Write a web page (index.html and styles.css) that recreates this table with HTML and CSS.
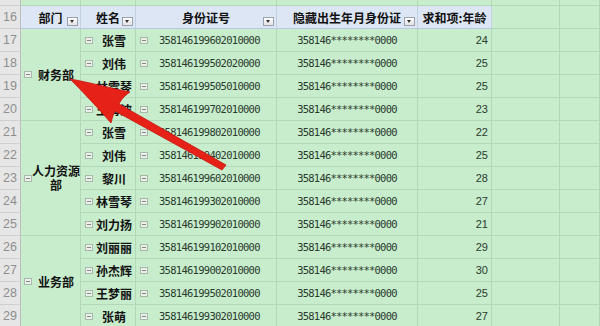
FILE: index.html
```html
<!DOCTYPE html>
<html lang="zh">
<head>
<meta charset="utf-8">
<link rel="stylesheet" href="styles.css">
</head>
<body>
<div class="page">
  <div class="sheet">
    <!-- row 15 (partial) -->
    <div class="rh"></div>
    <div class="c"></div><div class="c"></div><div class="c"></div><div class="c"></div><div class="c"></div><div class="c"></div><div class="c"></div>

    <!-- row 16 header -->
    <div class="rh">16</div>
    <div class="h">部门<span class="dd"></span></div>
    <div class="h">姓名<span class="dd"></span></div>
    <div class="h">身份证号<span class="dd"></span></div>
    <div class="h">隐藏出生年月身份证<span class="dd"></span></div>
    <div class="h">求和项:年龄</div>
    <div class="c"></div><div class="c"></div>

    <!-- 17 -->
    <div class="rh">17</div>
    <div class="dept span4"><span class="tog"></span><span class="dname">财务部</span></div>
    <div class="nm"><span class="tog"></span><span class="nt">张雪</span></div>
    <div class="id"><span class="tog"></span><span class="it">358146199602010000</span></div>
    <div class="mk">358146********0000</div>
    <div class="age">24</div>
    <div class="c"></div><div class="c"></div>

    <!-- 18 -->
    <div class="rh">18</div>
    <div class="nm"><span class="tog"></span><span class="nt">刘伟</span></div>
    <div class="id"><span class="tog"></span><span class="it">358146199502020000</span></div>
    <div class="mk">358146********0000</div>
    <div class="age">25</div>
    <div class="c"></div><div class="c"></div>

    <!-- 19 -->
    <div class="rh">19</div>
    <div class="nm"><span class="tog"></span><span class="nt">林雪琴</span></div>
    <div class="id"><span class="tog"></span><span class="it">358146199505010000</span></div>
    <div class="mk">358146********0000</div>
    <div class="age">25</div>
    <div class="c"></div><div class="c"></div>

    <!-- 20 -->
    <div class="rh">20</div>
    <div class="nm"><span class="tog"></span><span class="nt">王海波</span></div>
    <div class="id"><span class="tog"></span><span class="it">358146199702010000</span></div>
    <div class="mk">358146********0000</div>
    <div class="age">23</div>
    <div class="c"></div><div class="c"></div>

    <!-- 21 -->
    <div class="rh">21</div>
    <div class="dept span5"><span class="tog"></span><span class="dname">人力资源部</span></div>
    <div class="nm"><span class="tog"></span><span class="nt">张雪</span></div>
    <div class="id"><span class="tog"></span><span class="it">358146199802010000</span></div>
    <div class="mk">358146********0000</div>
    <div class="age">22</div>
    <div class="c"></div><div class="c"></div>

    <!-- 22 -->
    <div class="rh">22</div>
    <div class="nm"><span class="tog"></span><span class="nt">刘伟</span></div>
    <div class="id"><span class="tog"></span><span class="it">358146199402010000</span></div>
    <div class="mk">358146********0000</div>
    <div class="age">25</div>
    <div class="c"></div><div class="c"></div>

    <!-- 23 -->
    <div class="rh">23</div>
    <div class="nm"><span class="tog"></span><span class="nt">黎川</span></div>
    <div class="id"><span class="tog"></span><span class="it">358146199602010000</span></div>
    <div class="mk">358146********0000</div>
    <div class="age">28</div>
    <div class="c"></div><div class="c"></div>

    <!-- 24 -->
    <div class="rh">24</div>
    <div class="nm"><span class="tog"></span><span class="nt">林雪琴</span></div>
    <div class="id"><span class="tog"></span><span class="it">358146199302010000</span></div>
    <div class="mk">358146********0000</div>
    <div class="age">27</div>
    <div class="c"></div><div class="c"></div>

    <!-- 25 -->
    <div class="rh">25</div>
    <div class="nm"><span class="tog"></span><span class="nt">刘力扬</span></div>
    <div class="id"><span class="tog"></span><span class="it">358146199902010000</span></div>
    <div class="mk">358146********0000</div>
    <div class="age">21</div>
    <div class="c"></div><div class="c"></div>

    <!-- 26 -->
    <div class="rh">26</div>
    <div class="dept span4"><span class="tog"></span><span class="dname">业务部</span></div>
    <div class="nm"><span class="tog"></span><span class="nt">刘丽丽</span></div>
    <div class="id"><span class="tog"></span><span class="it">358146199102010000</span></div>
    <div class="mk">358146********0000</div>
    <div class="age">29</div>
    <div class="c"></div><div class="c"></div>

    <!-- 27 -->
    <div class="rh">27</div>
    <div class="nm"><span class="tog"></span><span class="nt">孙杰辉</span></div>
    <div class="id"><span class="tog"></span><span class="it">358146199002010000</span></div>
    <div class="mk">358146********0000</div>
    <div class="age">30</div>
    <div class="c"></div><div class="c"></div>

    <!-- 28 -->
    <div class="rh">28</div>
    <div class="nm"><span class="tog"></span><span class="nt">王梦丽</span></div>
    <div class="id"><span class="tog"></span><span class="it">358146199502010000</span></div>
    <div class="mk">358146********0000</div>
    <div class="age">25</div>
    <div class="c"></div><div class="c"></div>

    <!-- 29 -->
    <div class="rh">29</div>
    <div class="nm"><span class="tog"></span><span class="nt">张萌</span></div>
    <div class="id"><span class="tog"></span><span class="it">358146199302010000</span></div>
    <div class="mk">358146********0000</div>
    <div class="age">27</div>
    <div class="c"></div><div class="c"></div>
  </div>

  <svg class="arrow" width="600" height="326" viewBox="0 0 600 326">
    <path d="M70 79 C 88 82, 110 88, 130 92 C 124 96, 121 100, 119 104 L 226 165 L 222 170 L 115 111 C 113 115, 112 119, 111 123 C 98 108, 84 93, 70 79 Z" fill="#e62117" stroke="#c8140c" stroke-width="0.8"/>
  </svg>
</div>
</body>
</html>
```

FILE: styles.css
```css
* { box-sizing: border-box; }
html, body { margin: 0; padding: 0; }
body {
  width: 600px;
  height: 326px;
  overflow: hidden;
  background: #c7edcc;
  font-family: "Noto Sans CJK SC", "Noto Sans", sans-serif;
  color: #111;
}
.page { position: relative; width: 600px; height: 326px; overflow: hidden; }

.sheet {
  display: grid;
  grid-template-columns: 21px 60px 55px 141px 141px 74px 68px 40px;
  grid-template-rows: 6px repeat(14, 23px);
  background: #c7edcc;
}

.rh {
  background: #e6e6e6;
  border-right: 1px solid #bdbdbd;
  border-bottom: 1px solid #cfcfcf;
  color: #8e8e8e;
  font-family: "Liberation Sans", Arial, sans-serif;
  font-size: 12.5px;
  display: flex;
  align-items: center;
  justify-content: center;
}

.c, .h, .nm, .id, .mk, .age, .dept {
  border-right: 1px solid #b3d8b8;
  border-bottom: 1px solid #b3d8b8;
}

.h {
  position: relative;
  background: #dde6f4;
  border-right-color: #c3cfe2;
  border-bottom-color: #b9c8de;
  font-weight: 700;
  font-size: 12px;
  display: flex;
  align-items: center;
  justify-content: center;
  white-space: nowrap;
}
.dd {
  position: absolute;
  right: 2px;
  bottom: 2px;
  width: 11px;
  height: 9px;
  border: 1px solid #9aa3ad;
  background: linear-gradient(#ffffff, #e3e3e3);
}
.dd::after {
  content: "";
  position: absolute;
  left: 2px;
  top: 2px;
  border-left: 2.5px solid transparent;
  border-right: 2.5px solid transparent;
  border-top: 3px solid #333;
}

.tog {
  flex: none;
  position: relative;
  width: 8px;
  height: 7px;
  border: 1px solid #aab8ab;
  background: #e9f1ea;
}
.tog::after {
  content: "";
  position: absolute;
  left: 1px;
  right: 1px;
  top: 2px;
  height: 1px;
  background: #7f8a80;
}

.dept {
  display: flex;
  align-items: center;
  padding-left: 3px;
}
.span4 { grid-row: span 4; }
.span5 { grid-row: span 5; }
.dname {
  width: 48px;
  font-weight: 700;
  font-size: 12px;
  line-height: 14px;
  text-align: center;
}

.nm {
  display: flex;
  align-items: center;
  padding-left: 4px;
}
.nt {
  flex: 1;
  font-weight: 700;
  font-size: 12px;
  text-align: center;
  white-space: nowrap;
}

.id {
  display: flex;
  align-items: center;
  padding-left: 4px;
}
.it, .mk {
  font-family: "DejaVu Sans Mono", "Liberation Mono", monospace;
  font-size: 10.5px;
  letter-spacing: -0.72px;
  color: #2b3a2e;
  white-space: nowrap;
}
.it { margin-left: 11px; }
.mk {
  display: flex;
  align-items: center;
  justify-content: center;
  letter-spacing: -0.8px;
}

.age {
  display: flex;
  align-items: center;
  justify-content: flex-end;
  padding-right: 3px;
  font-family: "Liberation Sans", Arial, sans-serif;
  font-size: 11px;
  color: #2b3a2e;
}

.arrow {
  position: absolute;
  left: 0;
  top: 0;
  pointer-events: none;
}
```
